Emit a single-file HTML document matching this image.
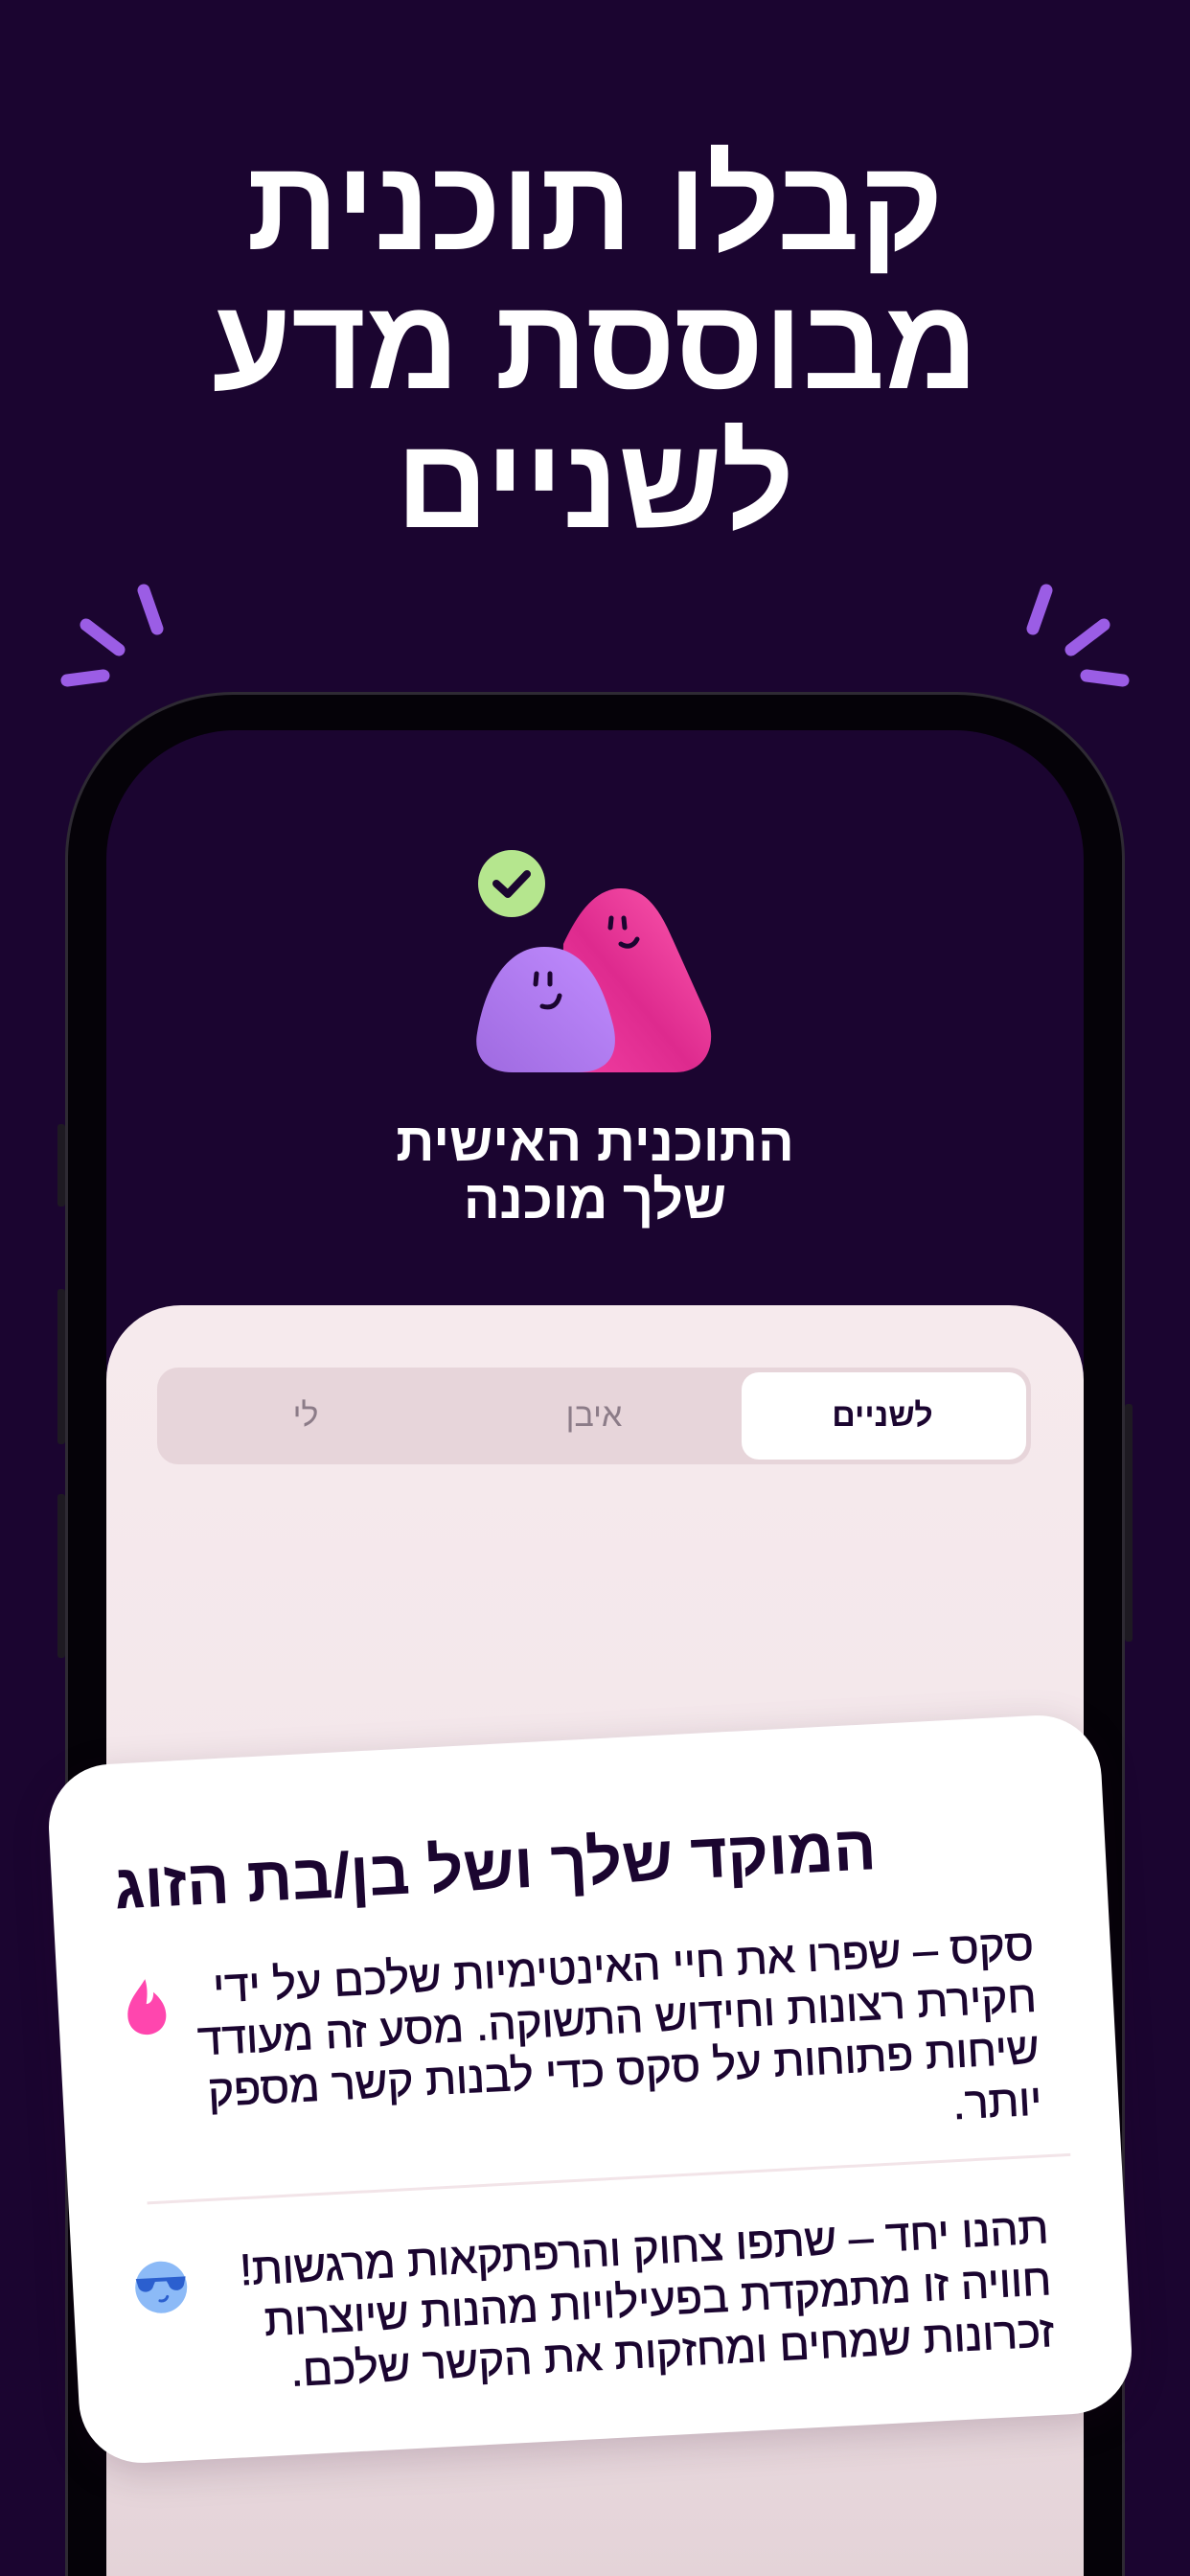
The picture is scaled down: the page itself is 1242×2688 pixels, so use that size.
<!DOCTYPE html>
<html><head><meta charset="utf-8"><style>
*{margin:0;padding:0;box-sizing:border-box}
html,body{width:1242px;height:2688px;overflow:hidden;background:#1b0530}
body{position:relative;font-family:"Liberation Sans","DejaVu Sans",sans-serif;direction:rtl}
.abs{position:absolute}
.h1{left:0;width:1242px;text-align:center;color:#fff;font-weight:bold;font-size:134px;line-height:145px;top:142px}
.phone{left:68px;top:722px;width:1106px;height:1966px;border-radius:175px 175px 0 0;background:#050208;border:3px solid #2e2a33;border-bottom:none}
.screen{left:111px;top:762px;width:1020px;height:1926px;border-radius:135px 135px 0 0;background:#1b0530;overflow:hidden}
.panel{left:0;top:600px;width:1020px;height:1326px;border-radius:78px 78px 0 0;background:linear-gradient(#f6eaed,#f3e6ea 50%,#e4d3d8)}
.seg{left:53px;top:65px;width:912px;height:101px;border-radius:22px;background:#e7d5da}
.sel{right:5px;top:5px;width:297px;height:91px;border-radius:18px;background:#fff}
.lbl{font-size:34px;line-height:101px;top:0;text-align:center;width:300px}
.ttl{left:0;width:1020px;text-align:center;color:#fff;font-weight:bold;font-size:56px;line-height:60px}
.card{left:66px;top:1815px;width:1100px;height:730px;background:#fff;border-radius:66px;transform:rotate(-3deg);box-shadow:0 10px 40px rgba(40,0,40,.18)}
.ln{right:80px;width:1000px;text-align:right;font-size:46px;line-height:52px;color:#1b0530;white-space:nowrap;-webkit-text-stroke:0.7px #1b0530}
.btn{background:#1e1a22;width:8px;border-radius:3px}
</style></head><body>
<div class="abs h1">קבלו תוכנית<br>מבוססת מדע<br>לשניים</div>

<svg class="abs" style="left:0;top:0" width="1242" height="760">
<g stroke="#9b5de5" stroke-width="13" stroke-linecap="round" fill="none">
<line x1="150" y1="616" x2="164" y2="656"/><line x1="90" y1="652" x2="124" y2="678"/><line x1="70" y1="710" x2="108" y2="705"/>
<line x1="1092" y1="616" x2="1078" y2="656"/><line x1="1152" y1="652" x2="1118" y2="678"/><line x1="1172" y1="710" x2="1134" y2="705"/>
</g></svg>

<div class="abs btn" style="left:60px;top:1173px;height:86px"></div>
<div class="abs btn" style="left:60px;top:1345px;height:162px"></div>
<div class="abs btn" style="left:60px;top:1559px;height:171px"></div>
<div class="abs btn" style="left:1174px;top:1465px;height:248px"></div>
<div class="abs phone"></div>
<div class="abs screen">
 <div class="abs ttl" style="top:400px">התוכנית האישית<br>שלך מוכנה</div>
 <div class="abs panel">
  <div class="abs seg">
   <div class="abs sel"></div>
   <div class="abs lbl" style="right:5px;color:#1b0530;font-weight:bold">לשניים</div>
   <div class="abs lbl" style="right:306px;color:#8c7c88">איבן</div>
   <div class="abs lbl" style="right:607px;color:#8c7c88">לי</div>
  </div>
 </div>
</div>

<svg class="abs" style="left:0;top:0" width="1242" height="1200">
<defs>
<linearGradient id="pk" x1="1" y1="0" x2="0" y2="1"><stop offset="0" stop-color="#ff5cb0"/><stop offset=".55" stop-color="#de2a8e"/><stop offset="1" stop-color="#f23fa3"/></linearGradient>
<linearGradient id="pp" x1="1" y1="0" x2="0" y2="1"><stop offset="0" stop-color="#c08cff"/><stop offset="1" stop-color="#9f6ae0"/></linearGradient>
</defs>
<circle cx="534" cy="922" r="35" fill="#b5e68e"/>
<path d="M518 922 L530 933 L550 912" stroke="#1b0530" stroke-width="8" fill="none" stroke-linecap="round" stroke-linejoin="round"/>
<path d="M648 927 C620 927 602 955 588 985 L585 1119 L705 1119 C738 1119 750 1088 737 1058 L702 980 C690 952 675 927 648 927 Z" fill="url(#pk)"/>
<path d="M568 988 C612 988 630 1030 640 1070 C648 1105 630 1119 603 1119 L535 1119 C505 1119 494 1100 498 1078 C506 1030 528 988 568 988 Z" fill="url(#pp)"/>
<g stroke="#1b0530" stroke-width="5" stroke-linecap="round" fill="none">
<path d="M638 958 L637 968 M651 958 L652 968 M648 985 C656 990 662 986 665 980"/>
<path d="M560 1016 L559 1027 M574 1016 L574 1027 M566 1050 C576 1053 582 1048 584 1039"/>
</g></svg>

<div class="abs card">
 <div class="abs" style="left:65px;top:88px;font-size:66px;line-height:80px;font-weight:bold;color:#1b0530;white-space:nowrap">המוקד שלך ושל בן/בת הזוג</div>
 <div class="abs ln" style="top:212px">סקס – שפרו את חיי האינטימיות שלכם על ידי</div>
 <div class="abs ln" style="top:266px">חקירת רצונות וחידוש התשוקה. מסע זה מעודד</div>
 <div class="abs ln" style="top:320px">שיחות פתוחות על סקס כדי לבנות קשר מספק</div>
 <div class="abs ln" style="top:374px">יותר.</div>
 <div class="abs" style="left:82px;top:458px;width:965px;height:3px;background:#f2e4e8"></div>
 <div class="abs ln" style="top:508px">תהנו יחד – שתפו צחוק והרפתקאות מרגשות!</div>
 <div class="abs ln" style="top:562px">חוויה זו מתמקדת בפעילויות מהנות שיוצרות</div>
 <div class="abs ln" style="top:616px">זכרונות שמחים ומחזקות את הקשר שלכם.</div>
 <svg class="abs" style="left:62px;top:220px" width="60" height="70"><path d="M30 6 C22 18 10 28 10 44 C10 56 19 64 30 64 C41 64 50 56 50 44 C50 32 42 24 38 20 C38 28 34 32 30 32 C32 22 32 14 30 6 Z" fill="#ff46ae"/></svg>
 <svg class="abs" style="left:60px;top:516px" width="64" height="64"><circle cx="32" cy="32" r="27" fill="#8cbaf7"/><path d="M6 22 L58 22 L56 30 C54 38 42 38 40 30 L38 26 L26 26 L24 30 C22 38 10 38 8 30 Z" fill="#2b5fcf"/><path d="M30 46 C34 47 37 45 38 42" stroke="#2b5fcf" stroke-width="3" fill="none" stroke-linecap="round"/></svg>
</div>
</body></html>
